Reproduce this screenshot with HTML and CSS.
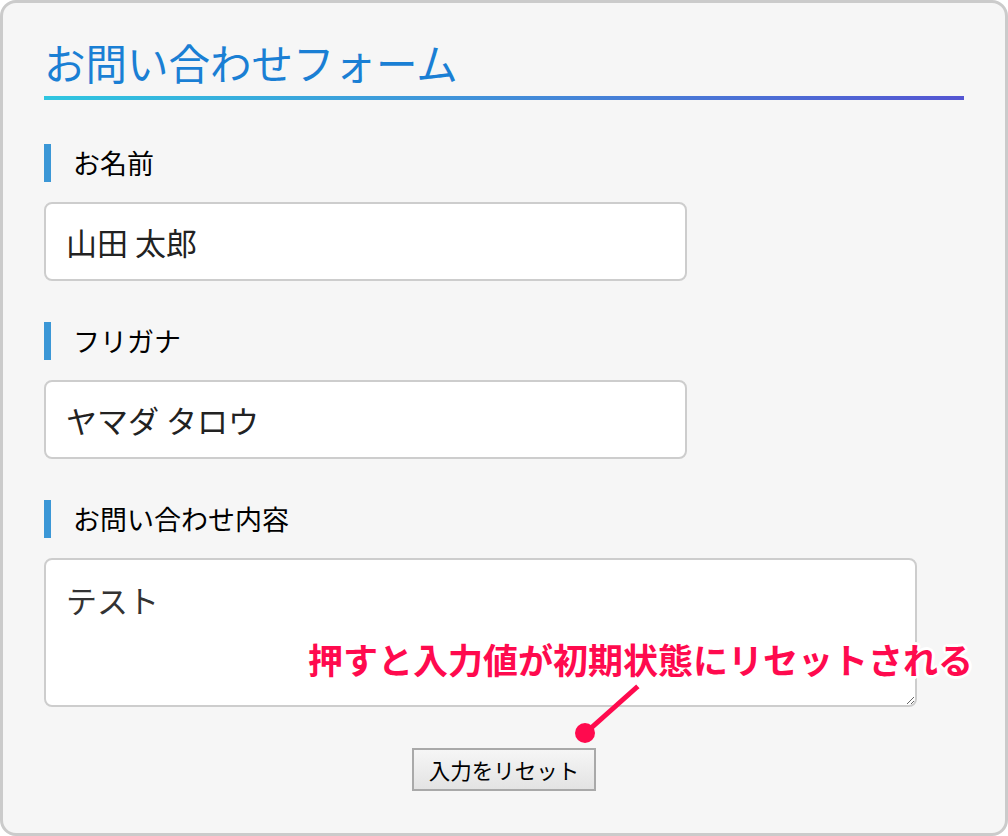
FILE: index.html
```
<!DOCTYPE html>
<html lang="ja">
<head>
<meta charset="utf-8">
<title>お問い合わせフォーム</title>
<link rel="stylesheet" href="styles.css">
</head>
<body>
<div class="frame">
  <h1 class="title">お問い合わせフォーム</h1>
  <form class="form">
    <label class="label" for="name">お名前</label>
    <input class="field" id="name" type="text" value="山田 太郎">

    <label class="label" for="kana">フリガナ</label>
    <input class="field" id="kana" type="text" value="ヤマダ タロウ">

    <label class="label" for="body">お問い合わせ内容</label>
    <textarea class="field area" id="body">テスト</textarea>

    <div class="actions">
      <input class="reset" type="reset" value="入力をリセット">
    </div>
  </form>

  <p class="note">押すと入力値が初期状態にリセットされる</p>
  <svg class="pointer" width="80" height="70" viewBox="0 0 80 70">
    <line x1="66" y1="6" x2="20" y2="47" stroke="#ff0a4e" stroke-width="5" stroke-linecap="square"/>
    <circle cx="15" cy="51" r="10" fill="#ff0a4e"/>
  </svg>
</div>
</body>
</html>
```

FILE: styles.css
```
*{
  box-sizing:border-box;
}
html, body{
  margin:0;
  padding:0;
  background:#fff;
}
body{
  font-family:"Noto Sans CJK JP", "Noto Sans", sans-serif;
  color:#000;
}

.frame{
  position:relative;
  width:1008px;
  height:836px;
  border:3px solid #cbcbcb;
  border-radius:16px;
  background:#f6f6f6;
  padding:31px 41px 0 41px;
}

/* heading with gradient underline */
.title{
  margin:0;
  font-size:41.5px;
  font-weight:normal;
  line-height:56px;
  color:#1a7fd4;
  padding:0 0 6px 0;
  border-bottom:4px solid #30c4e0;
  border-image:linear-gradient(to right, #2fc6e0, #5455d2) 1;
}

.form{
  display:flex;
  flex-direction:column;
  align-items:flex-start;
}

.label{
  display:block;
  height:38px;
  line-height:37px;
  margin-top:44px;
  margin-bottom:20px;
  padding-left:22px;
  border-left:7px solid #3b97d6;
  font-size:27px;
}
.label + .field + .label{
  margin-top:41px;
}

.field{
  display:block;
  width:643px;
  height:79px;
  border:2px solid #cdcdcd;
  border-radius:8px;
  background:#fff;
  padding:0 20px;
  font-family:inherit;
  font-size:31px;
  color:#222;
  outline:none;
}
.area{
  width:873px;
  height:149px;
  padding:16px 20px;
  line-height:47px;
  color:#333;
  resize:both;
}

.actions{
  align-self:stretch;
  display:flex;
  justify-content:center;
  margin-top:41px;
}
.reset{
  height:43px;
  padding:0 15px;
  border:2px solid #a9a9a9;
  background:linear-gradient(#f6f6f6, #e3e3e3);
  font-family:inherit;
  font-size:21.5px;
  color:#000;
}

/* callout over the form */
.note{
  position:absolute;
  left:305px;
  top:634px;
  margin:0;
  font-size:35px;
  font-weight:bold;
  line-height:44px;
  color:#ff0a4e;
  white-space:nowrap;
  text-shadow:
    3px 0 0 #fff, -3px 0 0 #fff, 0 3px 0 #fff, 0 -3px 0 #fff,
    2px 2px 0 #fff, -2px -2px 0 #fff, 2px -2px 0 #fff, -2px 2px 0 #fff;
}
.pointer{
  position:absolute;
  left:567px;
  top:679px;
}
```
